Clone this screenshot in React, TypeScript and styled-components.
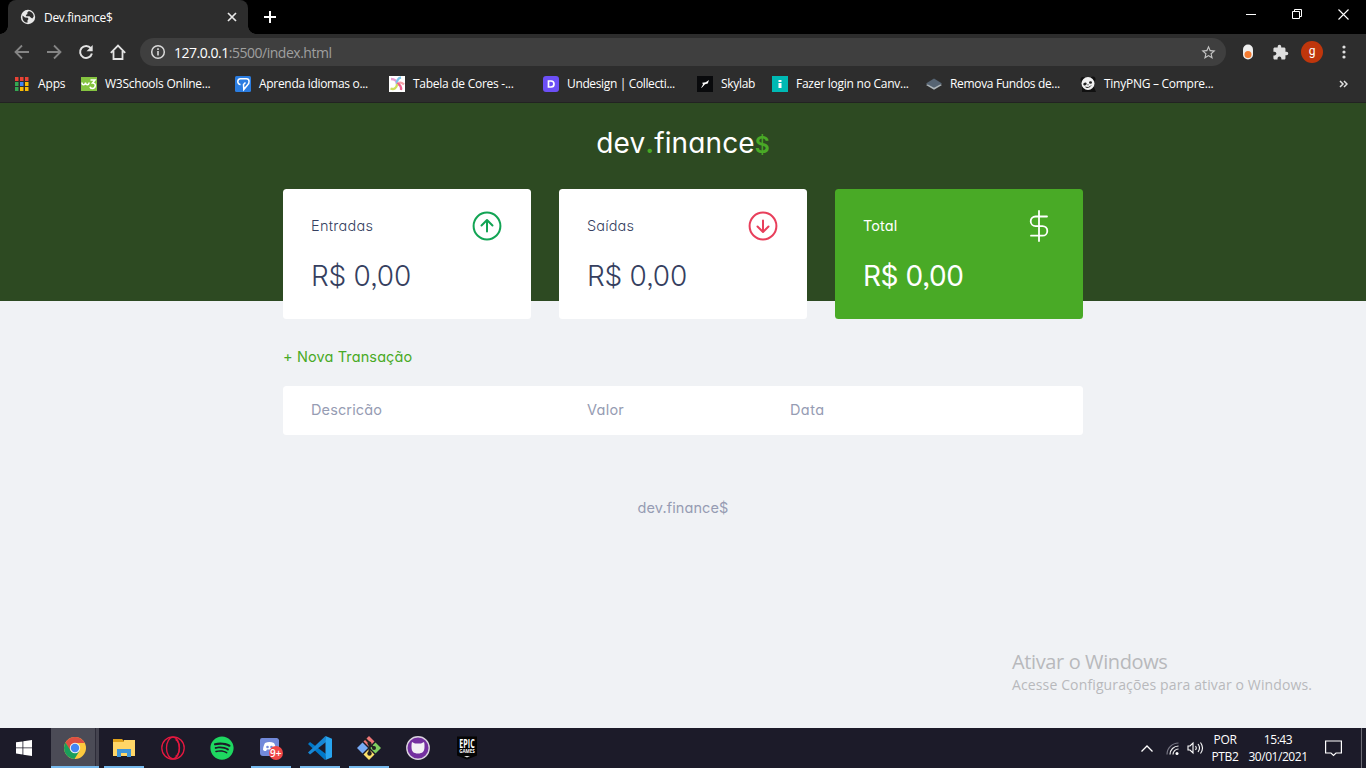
import React from "react";
import styled, { createGlobalStyle, css } from "styled-components";
import { FaSpotify } from "react-icons/fa";
import { MdExtension, MdStarBorder } from "react-icons/md";

const GlobalStyle = createGlobalStyle`
  * { box-sizing: border-box; }
  html, body { margin: 0; padding: 0; overflow: hidden; }
  body { width: 1366px; height: 768px; font-family: "Open Sans", "Noto Sans", sans-serif; }
  svg { display: block; flex: none; }
`;

const geometric = css`
  font-family: Inter, "Liberation Sans", sans-serif;
  font-feature-settings: "cv11" 1, "ss03" 1;
`;

const Screen = styled.div`
  width: 1366px;
  height: 768px;
  display: flex;
  flex-direction: column;
  overflow: hidden;
`;

/* Browser chrome */
const TabStrip = styled.div`
  height: 34px;
  background: #000;
  display: flex;
  padding-left: 8px;
  flex: none;
`;

const Tab = styled.div`
  position: relative;
  width: 240px;
  height: 34px;
  background: #2d2d2d;
  border-radius: 8px 8px 0 0;
  display: flex;
  align-items: center;
  padding: 0 10px 0 12px;
  color: #fff;
  font-size: 12px;
  &::before, &::after {
    content: "";
    position: absolute;
    bottom: 0;
    width: 8px;
    height: 8px;
  }
  &::before { left: -8px; background: radial-gradient(circle at 0 0, transparent 7.5px, #2d2d2d 8px); }
  &::after { right: -8px; background: radial-gradient(circle at 100% 0, transparent 7.5px, #2d2d2d 8px); }
`;

const Label = styled.span<{ $track?: number }>`
  white-space: nowrap;
  letter-spacing: ${(p) => p.$track ?? 0}px;
`;

const TabTitle = styled(Label)`
  margin-left: 8px;
  flex: 1;
`;

const NewTab = styled.div`
  display: flex;
  align-items: center;
  margin-left: 15px;
  flex: 1;
`;

const WindowButton = styled.div`
  width: 46px;
  height: 28px;
  display: flex;
  align-items: center;
  justify-content: center;
`;

const Toolbar = styled.div`
  height: 36px;
  background: #2d2d2d;
  display: flex;
  align-items: center;
  padding-left: 14px;
  flex: none;
`;

const NavButtons = styled.div`
  display: flex;
  gap: 16px;
  width: 126px;
  flex: none;
`;

const AddressBar = styled.div`
  width: 1086px;
  height: 28px;
  border-radius: 14px;
  background: #3f3f3f;
  display: flex;
  align-items: center;
  padding: 0 9px 0 10px;
  font-size: 14px;
  color: #9f9f9f;
  flex: none;
`;

const Url = styled(Label)`
  margin-left: 8px;
  flex: 1;
`;

const Host = styled.span`
  color: #fff;
`;

const ToolbarActions = styled.div`
  display: flex;
  align-items: center;
  padding-left: 6px;
`;

const ActionSlot = styled.div`
  width: 32px;
  display: flex;
  justify-content: center;
`;

const Avatar = styled.div`
  width: 22px;
  height: 22px;
  border-radius: 50%;
  background: #bf360c;
  color: #fff;
  font: 12px/20px Roboto, sans-serif;
  text-align: center;
`;

const BookmarkBar = styled.div`
  height: 33px;
  background: #2d2d2d;
  border-bottom: 1px solid #222;
  display: flex;
  padding: 0 18px 4px 14px;
  flex: none;
`;

const Bookmark = styled.div<{ $width: number }>`
  width: ${(p) => p.$width}px;
  display: flex;
  align-items: center;
  gap: 8px;
  color: #fff;
  font-size: 12px;
  line-height: 16px;
  flex: none;
`;

const Overflow = styled.div`
  flex: 1;
  display: flex;
  align-items: center;
  justify-content: flex-end;
`;

/* Page */
const Page = styled.div`
  height: 625px;
  background: #f0f2f5;
  flex: none;
  display: flex;
  flex-direction: column;
  align-items: center;
  ${geometric}
`;

const PageHeader = styled.header`
  width: 100%;
  height: 198px;
  background: #2d4a22;
  display: flex;
  justify-content: center;
  align-items: flex-start;
  padding-top: 19px;
  flex: none;
`;

const Logo = styled.div`
  color: #fff;
  font-size: 28px;
  line-height: 42px;
  font-weight: 440;
  white-space: nowrap;
  letter-spacing: 0.1px;
`;

const LogoMark = styled.span<{ $size: number }>`
  color: #49aa26;
  font-size: ${(p) => p.$size}px;
  font-weight: 600;
`;

const Container = styled.main`
  width: 800px;
  margin-top: -112px;
`;

const Cards = styled.section`
  display: grid;
  grid-template-columns: repeat(3, 1fr);
  gap: 28px;
`;

const Card = styled.div<{ $total?: boolean }>`
  height: 130px;
  border-radius: 3.5px;
  padding: 21px 28px 0;
  background: ${(p) => (p.$total ? "#49aa26" : "#fff")};
  color: ${(p) => (p.$total ? "#fff" : "#363f5f")};
  font-weight: ${(p) => (p.$total ? 400 : 350)};
`;

const CardHead = styled.h3`
  margin: 0;
  height: 32px;
  display: flex;
  align-items: center;
  justify-content: space-between;
  font-size: 14.5px;
  font-weight: inherit;
  line-height: 17px;
  & > span { padding-bottom: 2px; }
`;

const Amount = styled.p<{ $track: number }>`
  margin: 13px 0 0;
  font-size: 28px;
  line-height: 42px;
  white-space: nowrap;
  letter-spacing: ${(p) => p.$track}px;
`;

const NewTransaction = styled.a`
  display: block;
  margin-top: 27px;
  color: #49aa26;
  font-size: 14.5px;
  font-weight: 370;
  line-height: 21px;
`;

const TableHead = styled.div`
  margin-top: 19px;
  height: 49px;
  border-radius: 3.5px;
  background: #fff;
  display: grid;
  grid-template-columns: 276px 203px 1fr;
  align-items: center;
  padding: 0 0 2px 28px;
  color: #969cb3;
  font-size: 14.5px;
  font-weight: 370;
`;

const PageFooter = styled.footer`
  margin-top: 62px;
  text-align: center;
  color: #969cb3;
  font-size: 14.5px;
  font-weight: 370;
  line-height: 21px;
`;

const Watermark = styled.div`
  align-self: flex-end;
  width: 354px;
  margin-top: auto;
  padding-bottom: 33px;
  color: #b8b9bc;
  font-family: "Open Sans", "Noto Sans", sans-serif;
  font-size: 14px;
  line-height: 20px;
`;

const WatermarkTitle = styled.div`
  font-size: 20px;
  line-height: 27px;
`;

/* Taskbar */
const Taskbar = styled.div`
  height: 40px;
  background: #1c1b29;
  display: flex;
  flex: none;
`;

const TaskItem = styled.div<{ $running?: boolean; $active?: boolean; $start?: boolean }>`
  width: ${(p) => (p.$start ? 48 : 49)}px;
  height: 40px;
  display: flex;
  align-items: center;
  justify-content: center;
  ${(p) => p.$active && css`
    margin-left: 3px;
    width: 48px;
    background: linear-gradient(90deg, #4b4b56 44px, #2d2c39 44px, #2d2c39 45px, #44434f 45px);
  `}
  ${(p) => (p.$running || p.$active) && css`
    &::after {
      content: "";
      position: absolute;
      top: 766px;
      width: ${p.$active ? 48 : 40}px;
      height: 2px;
      background: #76b9ed;
    }
  `}
`;

const Tray = styled.div`
  margin-left: auto;
  display: flex;
  align-items: center;
  color: #fff;
  font-size: 12px;
  line-height: 17px;
  text-align: center;
`;

const TrayText = styled.div<{ $width: number }>`
  width: ${(p) => p.$width}px;
  display: flex;
  flex-direction: column;
  align-items: center;
  padding-bottom: 1px;
`;

const TrayIcon = styled.div<{ $width: number }>`
  width: ${(p) => p.$width}px;
  display: flex;
  justify-content: center;
`;

const ShowDesktop = styled.div`
  width: 5px;
  height: 40px;
  margin-left: 5px;
  border-left: 1px solid #6c6b75;
`;

const Arrow = ({ flip }: { flip?: boolean }) => (
  <svg width="16" height="16" viewBox="0 0 16 16" fill="none" stroke="#858585" strokeWidth="1.8">
    <path d={flip ? "M1 8h13M8 1.500 14.500 8 8 14.500" : "M15 8H2M8 1.500 1.500 8 8 14.500"} />
  </svg>
);

const GlobeIcon = () => (
  <svg width="16" height="16" viewBox="0 0 16 16">
    <circle cx="8" cy="8" r="7.200" fill="#e8e8e8" />
    <path d="M2.500 6.500 5 8.500l2.800.2.700 1.300-1 1.300v2.500C4 13.500 2 11 2.500 6.500zM8.500 2.300 7.200 3.800 7.500 5 5.800 6l.5 1.300h3.200l1.500 1.500 1.300.8 1.300-1.800C14 4.800 11.500 2.300 8.500 2.300z" fill="#2d2d2d" />
  </svg>
);

const ReloadIcon = () => (
  <svg width="16" height="16" viewBox="0 0 16 16">
    <path d="M12.800 4.200A6 6 0 1 0 13.900 9.500" fill="none" stroke="#e3e3e3" strokeWidth="2" />
    <path d="M14.700 1v6.200H8.500z" fill="#e3e3e3" />
  </svg>
);

const InfoIcon = () => (
  <svg width="16" height="16" viewBox="0 0 16 16">
    <circle cx="8" cy="8" r="6.300" fill="none" stroke="#dadada" strokeWidth="1.500" />
    <path d="M7.200 4.300h1.600v1.600H7.200zM7.200 7h1.600v4.500H7.200z" fill="#dadada" />
  </svg>
);

const AppsIcon = () => {
  const colors = ["#ea4335", "#ea4335", "#ea4335", "#34a853", "#4285f4", "#fbbc05", "#34a853", "#fbbc05", "#fbbc05"];
  return (
    <svg width="16" height="16">
      {colors.map((c, i) => (
        <rect key={i} x={1 + (i % 3) * 5} y={1 + Math.floor(i / 3) * 5} width="3.500" height="4" fill={c} />
      ))}
    </svg>
  );
};

const W3Icon = () => (
  <svg width="16" height="16" viewBox="0 0 16 16" fill="none" stroke="#fff" strokeWidth="1.5">
    <rect width="16" height="14" y="1" fill="#85c440" stroke="none" />
    <path d="M1 6.500c0 3 3 3 3.500 0c.5 3 3 3 3.800 0M9.500 4h4.500l-2.500 3c4 0 3.500 5.500-.3 5.500-1.200 0-2-.6-2.300-1.700" />
  </svg>
);

const AprendaIcon = () => (
  <svg width="16" height="16" viewBox="0 0 16 16" fill="none" stroke="#fff" strokeWidth="1.5">
    <rect width="16" height="16" rx="1.500" fill="#2b7de1" stroke="none" />
    <path d="M5.500 8.500C1.800 8.500 2 2.700 5.500 2.700h6C15 2.700 14.500 7.500 12.500 9L8.800 13.500 8.500 8.500 10.500 6.500" />
  </svg>
);

const PinwheelIcon = () => (
  <svg width="16" height="16" viewBox="0 0 16 16" fill="none" strokeWidth="2.300">
    <rect width="16" height="16" fill="#fff" />
    <path d="M8 8C8 5 5.500 3 2 3" stroke="#e79ad0" />
    <path d="M8 8c-.5-3 1-6 4-6.500" stroke="#7cc4ea" />
    <path d="M8 8c2-2 5-2 7 .5" stroke="#f4a0a8" />
    <path d="M8 8c3 0 4.500 3 4 6" stroke="#ed5f8d" />
    <path d="M8 8c0 4-3 6-6.500 4.500" stroke="#cede5c" />
  </svg>
);

const UndesignIcon = () => (
  <svg width="16" height="16" viewBox="0 0 16 16">
    <rect width="16" height="16" rx="3" fill="#6c4ff6" />
    <path d="M5.500 5h2.500a3 3 0 0 1 0 6H5.500z" fill="none" stroke="#fff" strokeWidth="1.700" />
  </svg>
);

const SkylabIcon = () => (
  <svg width="16" height="16" viewBox="0 0 16 16">
    <rect width="16" height="16" fill="#090a0c" />
    <path d="m4 12 2-3.500-.8-1.800 3.500-.4L12 4l-1.200 3.500L8 8.300 5 11.500z" fill="#fff" />
  </svg>
);

const CanvasIcon = () => (
  <svg width="16" height="16" viewBox="0 0 16 16">
    <rect width="16" height="16" fill="#00b9b4" />
    <path d="M6.500 4h3v2h-3zM6.500 7h3v5h-3z" fill="#fff" />
  </svg>
);

const LayersIcon = () => (
  <svg width="16" height="16" viewBox="0 0 16 16">
    <path d="m0 9 8 4.800L16 9l-3-1.500H3z" fill="#aeb6bb" />
    <path d="m0 7.500 8-5 8 5-8 4.200z" fill="#566473" />
  </svg>
);

const PandaIcon = () => (
  <svg width="16" height="16" viewBox="0 0 16 16">
    <circle cx="3" cy="3.500" r="2.500" fill="#111" />
    <circle cx="13" cy="3" r="2.500" fill="#111" />
    <path d="M2 11h12l2 5H2z" fill="#111" />
    <ellipse cx="8" cy="7.500" rx="6.500" ry="6.500" fill="#f2f2f2" />
    <ellipse cx="5" cy="8" rx="1.800" ry="1.300" transform="rotate(-25 5 8)" fill="#222" />
    <ellipse cx="10.500" cy="6.500" rx="1.500" ry="1.200" fill="#222" />
    <path d="M5.500 11c2 1 4 .5 5.500-1.500M7.500 8.800h1" fill="none" stroke="#222" />
  </svg>
);

const bookmarks = [
  { label: "Apps", width: 67, track: -0.15, icon: <AppsIcon /> },
  { label: "W3Schools Online...", width: 154, track: -0.25, icon: <W3Icon /> },
  { label: "Aprenda idiomas o...", width: 154, track: -0.3, icon: <AprendaIcon /> },
  { label: "Tabela de Cores -...", width: 154, track: -0.27, icon: <PinwheelIcon /> },
  { label: "Undesign | Collecti...", width: 154, track: -0.36, icon: <UndesignIcon /> },
  { label: "Skylab", width: 75, track: -0.3, icon: <SkylabIcon /> },
  { label: "Fazer login no Canv...", width: 154, track: -0.25, icon: <CanvasIcon /> },
  { label: "Remova Fundos de...", width: 154, track: -0.33, icon: <LayersIcon /> },
  { label: "TinyPNG – Compre...", width: 154, track: -0.27, icon: <PandaIcon /> },
];

const CircleArrow = ({ down }: { down?: boolean }) => (
  <svg width="32" height="32" viewBox="0 0 32 32" fill="none" stroke={down ? "#e83f5b" : "#12a454"} strokeWidth="2" strokeLinecap="round" strokeLinejoin="round">
    <circle cx="16" cy="16" r="13.400" />
    {down ? <path d="M16 10.500v11M10.500 16.500 16 22l5.500-5.500" /> : <path d="M16 21.500v-11M10.500 15.500 16 10l5.500 5.500" />}
  </svg>
);

const DollarIcon = () => (
  <svg width="32" height="32" viewBox="0 0 32 32" fill="none" stroke="#fff" strokeWidth="1.800" strokeLinecap="round">
    <path d="M16 1v30M24 6.500H12.500a4.800 4.800 0 0 0 0 9.600h7a4.800 4.800 0 0 1 0 9.600H8" />
  </svg>
);

const WindowsIcon = () => (
  <svg width="16" height="16" viewBox="0 0 16 16" fill="#fff">
    <path d="m0 2.300 6.500-.9v6.100H0zM7.300 1.300 16 0v7.500H7.300zM0 8.300h6.500v6.200L0 13.600zM7.300 8.300H16V16l-8.700-1.300z" />
  </svg>
);

const ChromeIcon = () => (
  <svg width="22" height="22" viewBox="0 0 22 22">
    <circle cx="11" cy="11" r="11" fill="#fdc93e" />
    <path d="M1.500 5.500A11 11 0 0 1 20.500 5.500V6H11l-5 8z" fill="#dd4f43" />
    <path d="M1.500 5.500A11 11 0 0 0 10.500 22l5.200-8.500H6.500z" fill="#1a9e5b" />
    <circle cx="11" cy="11" r="5.200" fill="#f1f1f1" />
    <circle cx="11" cy="11" r="4.200" fill="#4486f4" />
  </svg>
);

const FolderIcon = () => (
  <svg width="22" height="20" viewBox="0 0 22 20">
    <path d="M0 1h9l2 2h11v15H0z" fill="#e0a21b" />
    <path d="M0 4h11V2h11v16H0z" fill="#ffd667" />
    <path d="M4 11h14v8h-4v-4H8v4H4z" fill="#3f96d9" />
  </svg>
);

const OperaIcon = () => (
  <svg width="24" height="24" viewBox="0 0 24 24" fill="none" stroke="#e6183f" strokeWidth="1.300">
    <circle cx="12" cy="12" r="11.200" />
    <ellipse cx="12" cy="12" rx="6.500" ry="10.800" />
    <path d="M14.500 3.500c5 3 5 14 0 17" />
  </svg>
);

const DiscordIcon = () => (
  <svg width="24" height="24" viewBox="0 0 24 24">
    <path d="M3 2h15a3 3 0 0 1 2 2v18l-4-2H4a3 3 0 0 1-3-3V4a2 2 0 0 1 2-2z" fill="#7289da" />
    <path d="M6 7c3-1.500 6-1.500 9 0 1 2 2 4 2 7-1 1-2 1-3 1l-1-1.500H8L7 15c-1 0-2 0-3-1 0-3 1-5 2-7z" fill="#fff" />
    <circle cx="8.500" cy="11" r="1.300" fill="#7289da" />
    <circle cx="12.500" cy="11" r="1.300" fill="#7289da" />
    <circle cx="17" cy="17" r="7" fill="#f04747" />
    <text x="16.800" y="20.500" fontSize="10" fontWeight="600" fontFamily="Open Sans, sans-serif" fill="#fff" textAnchor="middle">9+</text>
  </svg>
);

const VsCodeIcon = () => (
  <svg width="24" height="24" viewBox="0 0 24 24">
    <path d="m0 8 2-2 16 12-1 6z" fill="#0078c8" />
    <path d="m0 16.500 2 2L18 6l-.5-6z" fill="#1787d5" />
    <path d="m17.500 0 6.500 2.700v18.600L17.500 24z" fill="#27a4ef" />
  </svg>
);

const GitIcon = () => (
  <svg width="24" height="24" viewBox="0 0 24 24">
    <path d="m12 0 5.500 5.500L12 11 6.500 5.500z" fill="#ee7777" />
    <path d="m5.500 6.500 5.500 5.500-5.500 5.500L0 12z" fill="#77aaf5" />
    <path d="m18.500 6.500L24 12l-5.500 5.500L13 12z" fill="#80cf60" />
    <path d="m12 13 5.500 5.500L12 24l-5.500-5.500z" fill="#fce16b" />
    <path d="M8 2.500 12.500 7v11M12.500 8l4.500 4" stroke="#222" strokeWidth="2" fill="none" />
    <circle cx="12.500" cy="7.500" r="2" fill="#222" />
    <circle cx="12.500" cy="17.500" r="2.200" fill="#222" />
    <circle cx="17" cy="12" r="2" fill="#222" />
  </svg>
);

const GithubDesktopIcon = () => (
  <svg width="24" height="24" viewBox="0 0 24 24">
    <circle cx="12" cy="12" r="11.200" fill="#7430a0" stroke="#d9d2de" strokeWidth="1.400" />
    <path d="M6 6 9 7.500h6L18 6c.6 2 .5 3 .5 5 0 4.500-2 6.500-6.500 6.500s-6.500-2-6.500-6.500c0-2 0-3 .5-5z" fill="#f3f0f5" />
  </svg>
);

const EpicIcon = () => (
  <svg width="40" height="36" viewBox="-9 -6 40 36">
    <path d="M1 .5h20v19L11 23.500 1 19.500z" fill="#050505" />
    <text transform="translate(11 11.500) scale(0.620 1)" fontSize="11.500" fontWeight="700" fontFamily="Open Sans, sans-serif" fill="#fff" textAnchor="middle">EPIC</text>
    <text transform="translate(11 17.300)" fontSize="4.500" fontWeight="700" fontFamily="Open Sans, sans-serif" fill="#fff" textAnchor="middle">GAMES</text>
    <path d="M8 20h6l-3 1.500z" fill="#ddd" />
  </svg>
);

export default function App() {
  return (
    <Screen>
      <GlobalStyle />
      <TabStrip>
        <Tab>
          <GlobeIcon />
          <TabTitle $track={-0.33}>Dev.finance$</TabTitle>
          <svg width="12" height="12" viewBox="0 0 12 12" stroke="#e8e8e8" strokeWidth="1.700"><path d="m2 2 8 8M10 2l-8 8" /></svg>
        </Tab>
        <NewTab>
          <svg width="14" height="14" viewBox="0 0 14 14" stroke="#fff" strokeWidth="2"><path d="M7 1v12M1 7h12" /></svg>
        </NewTab>
        <WindowButton><svg width="10" height="10"><rect y="5" width="10" height="1" fill="#fff" /></svg></WindowButton>
        <WindowButton>
          <svg width="10" height="10" fill="none" stroke="#fff"><path d="M.5 2.500h7v7h-7zM2.500 2.500v-2h7v7h-2" /></svg>
        </WindowButton>
        <WindowButton><svg width="11" height="11" stroke="#fff" strokeWidth="1.100"><path d="m.5.5 10 10M10.500.5l-10 10" /></svg></WindowButton>
      </TabStrip>
      <Toolbar>
        <NavButtons>
          <Arrow />
          <Arrow flip />
          <ReloadIcon />
          <svg width="16" height="16" viewBox="0 0 16 16" fill="none" stroke="#e3e3e3" strokeWidth="1.800"><path d="M.8 8.800 8 1.500l7.200 7.300M3.500 7v8h9V7" /></svg>
        </NavButtons>
        <AddressBar>
          <InfoIcon />
          <Url $track={-0.48}><Host>127.0.0.1</Host>:5500/index.html</Url>
          <MdStarBorder size={17} color="#c4c4c4" />
        </AddressBar>
        <ToolbarActions>
          <ActionSlot><svg width="10" height="16"><rect width="10" height="15" y=".5" rx="5" fill="#eee" /><circle cx="5" cy="10.500" r="3.500" fill="#f47b30" /></svg></ActionSlot>
          <ActionSlot><MdExtension size={17} color="#dedede" /></ActionSlot>
          <ActionSlot><Avatar>g</Avatar></ActionSlot>
          <ActionSlot><svg width="4" height="14" fill="#dedede"><circle cx="2" cy="2" r="1.600" /><circle cx="2" cy="7" r="1.600" /><circle cx="2" cy="12" r="1.600" /></svg></ActionSlot>
        </ToolbarActions>
      </Toolbar>
      <BookmarkBar>
        {bookmarks.map((b) => (
          <Bookmark key={b.label} $width={b.width}>
            {b.icon}
            <Label $track={b.track}>{b.label}</Label>
          </Bookmark>
        ))}
        <Overflow>
          <svg width="9" height="8" viewBox="0 0 9 8" fill="none" stroke="#e0e0e0" strokeWidth="1.500"><path d="m1 1 3 3-3 3M5 1l3 3-3 3" /></svg>
        </Overflow>
      </BookmarkBar>

      <Page>
        <PageHeader>
          <Logo>dev<LogoMark $size={28}>.</LogoMark>finance<LogoMark $size={23}>$</LogoMark></Logo>
        </PageHeader>
        <Container>
          <Cards>
            <Card>
              <CardHead><Label $track={0.28}>Entradas</Label><CircleArrow /></CardHead>
              <Amount $track={-0.25}>R$ 0,00</Amount>
            </Card>
            <Card>
              <CardHead><Label $track={0.15}>Saídas</Label><CircleArrow down /></CardHead>
              <Amount $track={-0.25}>R$ 0,00</Amount>
            </Card>
            <Card $total>
              <CardHead><Label $track={0.1}>Total</Label><DollarIcon /></CardHead>
              <Amount $track={-0.45}>R$ 0,00</Amount>
            </Card>
          </Cards>
          <NewTransaction><Label $track={0.12}>+ Nova Transação</Label></NewTransaction>
          <TableHead>
            <Label $track={0.12}>Descricão</Label>
            <Label $track={0.25}>Valor</Label>
            <Label $track={0.4}>Data</Label>
          </TableHead>
          <PageFooter><Label $track={0.1}>dev.finance$</Label></PageFooter>
        </Container>
        <Watermark>
          <WatermarkTitle><Label $track={-0.38}>Ativar o Windows</Label></WatermarkTitle>
          <Label $track={0.13}>Acesse Configurações para ativar o Windows.</Label>
        </Watermark>
      </Page>

      <Taskbar>
        <TaskItem $start><WindowsIcon /></TaskItem>
        <TaskItem $active><ChromeIcon /></TaskItem>
        <TaskItem $running><FolderIcon /></TaskItem>
        <TaskItem><OperaIcon /></TaskItem>
        <TaskItem><FaSpotify size={24} color="#1ed760" /></TaskItem>
        <TaskItem $running><DiscordIcon /></TaskItem>
        <TaskItem $running><VsCodeIcon /></TaskItem>
        <TaskItem $running><GitIcon /></TaskItem>
        <TaskItem><GithubDesktopIcon /></TaskItem>
        <TaskItem><EpicIcon /></TaskItem>
        <Tray>
          <TrayIcon $width={24}><svg width="12" height="7" fill="none" stroke="#fff" strokeWidth="1.300"><path d="m.5 6.500 5.500-5.500 5.500 5.500" /></svg></TrayIcon>
          <TrayIcon $width={26}>
            <svg width="13" height="13" fill="none" strokeWidth="1.200">
              <path d="M1 12.500A11.500 11.500 0 0 1 12.500 1" stroke="#777683" />
              <path d="M4 12.500A8.500 8.500 0 0 1 12.500 4M7 12.500A5.500 5.500 0 0 1 12.500 7" stroke="#eee" />
              <circle cx="11" cy="11.500" r="1.500" fill="#fff" />
            </svg>
          </TrayIcon>
          <TrayIcon $width={20}>
            <svg width="17" height="14" fill="none" stroke="#fff" strokeWidth="1.100">
              <path d="M1 5h2l3-3v10L3 9H1zM8.500 5q1.500 2 0 4M11 3q3 4 0 8M13.500 1.500q4 5.500 0 11" />
            </svg>
          </TrayIcon>
          <TrayText $width={40}><Label $track={-0.3}>POR</Label><Label $track={-0.3}>PTB2</Label></TrayText>
          <TrayText $width={66}><Label $track={-0.45}>15:43</Label><Label $track={-0.45}>30/01/2021</Label></TrayText>
          <TrayIcon $width={45}>
            <svg width="17" height="17" fill="none" stroke="#fff" strokeWidth="1.200"><path d="M.6 1h15.800v12H11l-2.500 2.500L6 13H.6z" /></svg>
          </TrayIcon>
          <ShowDesktop />
        </Tray>
      </Taskbar>
    </Screen>
  );
}
